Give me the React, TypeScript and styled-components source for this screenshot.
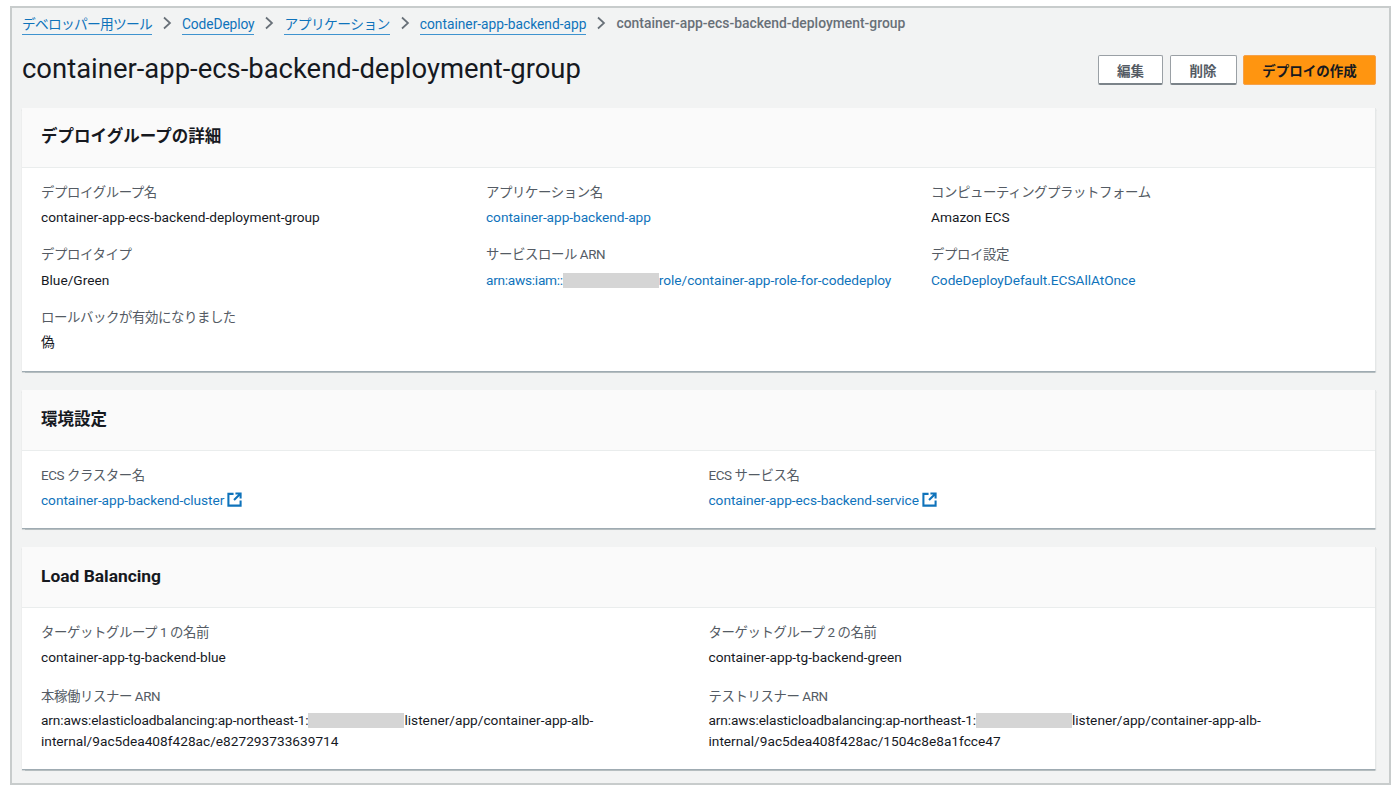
import React from 'react';
import styled, { createGlobalStyle } from 'styled-components';

const Global = createGlobalStyle`
  html, body { margin: 0; padding: 0; background: #ffffff; }
  body { font-family: Roboto, "Noto Sans CJK JP", sans-serif; color: #16191f; }
`;

const Frame = styled.div`
  box-sizing: border-box;
  width: 1381px;
  height: 779px;
  margin: 6px 0 0 10px;
  padding: 0 13px 0 10px;
  background: #f2f3f3;
  border: 2px solid #c8cccc;
`;

const Breadcrumbs = styled.nav`
  box-sizing: border-box;
  display: flex;
  align-items: center;
  height: 30px;
  font-size: 13.75px;
`;

const Crumb = styled.a<{ $tracking?: number }>`
  color: #0f73bb;
  border-bottom: 1.5px solid #3f93cf;
  line-height: 19px;
  padding-top: 3px;
  letter-spacing: ${p => p.$tracking ?? 0}px;
`;

const CurrentCrumb = styled.span`
  color: #687078;
  font-weight: 500;
  font-size: 13.9px;
  line-height: 19px;
  padding-top: 1px;
`;

const Chevron = styled.svg`
  width: 10px;
  height: 14px;
  margin: 0 10px 0 10px;
  fill: none;
  stroke: #687078;
  stroke-width: 1.7;
`;

const HeaderRow = styled.header`
  display: flex;
  align-items: center;
  justify-content: space-between;
  height: 52px;
  margin-top: 5px;
  margin-bottom: 13px;
`;

const Title = styled.h1`
  margin: 0;
  font-size: 27.45px;
  font-weight: 400;
  color: #16191f;
`;

const Actions = styled.div`
  display: flex;
  gap: 6.5px;
  margin-top: 2px;
`;

const Button = styled.button<{ $primary?: boolean; $w: number }>`
  box-sizing: border-box;
  width: ${p => p.$w}px;
  height: 30px;
  padding: 0;
  border-radius: 2px;
  border: 1px solid ${p => (p.$primary ? '#f5a14a' : '#9aa0a5')};
  border-bottom-width: ${p => (p.$primary ? 1 : 2)}px;
  border-bottom-color: ${p => (p.$primary ? '#f5a14a' : '#7b8389')};
  background: ${p => (p.$primary ? '#ff9510' : '#ffffff')};
  color: ${p => (p.$primary ? '#16191f' : '#545b64')};
  font-family: inherit;
  font-size: 13.5px;
  font-weight: 700;
`;

const Card = styled.section<{ $h: number }>`
  box-sizing: border-box;
  height: ${p => p.$h}px;
  margin-bottom: 18px;
  background: #ffffff;
  border-right: 1px solid #e4e7e7;
  border-bottom: 1px solid #9fabb2;
  box-shadow: 0 0.5px 1px rgba(0, 28, 36, 0.25);
`;

const CardHeader = styled.div<{ $h: number }>`
  box-sizing: border-box;
  display: flex;
  align-items: center;
  height: ${p => p.$h}px;
  padding: 0 19px 5px;
  background: #fafafa;
  border-bottom: 1px solid #eaeded;
`;

const CardTitle = styled.h2<{ $latin?: boolean }>`
  margin: 0;
  padding-top: ${p => (p.$latin ? 2 : 0)}px;
  font-size: ${p => (p.$latin ? 17.4 : 16.5)}px;
  font-weight: 700;
  color: #16191f;
`;

const Fields = styled.div<{ $cols: number; $gap: number }>`
  display: grid;
  grid-template-columns: repeat(${p => p.$cols}, ${p => (p.$cols === 3 ? '445px' : '667.5px')});
  padding: 11.5px 19px 0;
  row-gap: ${p => p.$gap}px;
`;

const Field = styled.div`
  min-width: 0;
`;

const Label = styled.div`
  font-size: 13.4px;
  line-height: 25px;
  letter-spacing: -0.4px;
  color: #545b64;
`;

const Value = styled.div`
  font-size: 13.7px;
  line-height: 20px;
  margin-top: 2.5px;
  color: #16191f;
`;

const Wrapped = styled(Value)`
  width: 560px;
  line-height: 21px;
  margin-top: 1.5px;
`;

const LinkText = styled.a`
  color: #0f73bb;
  letter-spacing: -0.04px;
`;

const Prefix = styled.span<{ $tracking: number }>`
  letter-spacing: ${p => p.$tracking}px;
`;

const Mask = styled.span`
  display: inline-block;
  width: 96px;
  height: 15px;
  vertical-align: -3px;
  background: #d5d5d5;
`;

const ExternalIcon = styled.svg`
  width: 15px;
  height: 15px;
  margin-left: 3px;
  vertical-align: -2px;
  fill: none;
  stroke: #0f73bb;
  stroke-width: 2.2;
`;

const External = () => (
  <ExternalIcon viewBox="0 0 16 16" aria-hidden>
    <path d="M7 2H1.5v12.5h13V9" />
    <path d="M9 1.5h5.5V7M14.5 1.5 7.5 8.5" />
  </ExternalIcon>
);

const Sep = () => (
  <Chevron viewBox="0 0 10 14" aria-hidden>
    <path d="M2 1.5 8 7l-6 5.5" />
  </Chevron>
);

export default function App() {
  return (
    <>
      <Global />
      <Frame>
        <Breadcrumbs>
          <Crumb $tracking={-0.75}>デベロッパー用ツール</Crumb>
          <Sep />
          <Crumb $tracking={-0.1}>CodeDeploy</Crumb>
          <Sep />
          <Crumb $tracking={-0.55}>アプリケーション</Crumb>
          <Sep />
          <Crumb>container-app-backend-app</Crumb>
          <Sep />
          <CurrentCrumb>container-app-ecs-backend-deployment-group</CurrentCrumb>
        </Breadcrumbs>
        <HeaderRow>
          <Title>container-app-ecs-backend-deployment-group</Title>
          <Actions>
            <Button $w={65}>編集</Button>
            <Button $w={67}>削除</Button>
            <Button $w={133} $primary>デプロイの作成</Button>
          </Actions>
        </HeaderRow>

        <Card $h={264}>
          <CardHeader $h={60}><CardTitle>デプロイグループの詳細</CardTitle></CardHeader>
          <Fields $cols={3} $gap={15}>
            <Field><Label>デプロイグループ名</Label><Value>container-app-ecs-backend-deployment-group</Value></Field>
            <Field><Label>アプリケーション名</Label><Value><LinkText>container-app-backend-app</LinkText></Value></Field>
            <Field><Label>コンピューティングプラットフォーム</Label><Value>Amazon ECS</Value></Field>
            <Field><Label>デプロイタイプ</Label><Value>Blue/Green</Value></Field>
            <Field><Label>サービスロール ARN</Label><Value><LinkText><Prefix $tracking={-0.28}>arn:aws:iam::</Prefix><Mask />role/container-app-role-for-codedeploy</LinkText></Value></Field>
            <Field><Label>デプロイ設定</Label><Value><LinkText>CodeDeployDefault.ECSAllAtOnce</LinkText></Value></Field>
            <Field><Label>ロールバックが有効になりました</Label><Value>偽</Value></Field>
          </Fields>
        </Card>

        <Card $h={139}>
          <CardHeader $h={61}><CardTitle>環境設定</CardTitle></CardHeader>
          <Fields $cols={2} $gap={15}>
            <Field><Label>ECS クラスター名</Label><Value><LinkText>container-app-backend-cluster<External /></LinkText></Value></Field>
            <Field><Label>ECS サービス名</Label><Value><LinkText>container-app-ecs-backend-service<External /></LinkText></Value></Field>
          </Fields>
        </Card>

        <Card $h={223}>
          <CardHeader $h={61}><CardTitle $latin>Load Balancing</CardTitle></CardHeader>
          <Fields $cols={2} $gap={16.5}>
            <Field><Label>ターゲットグループ 1 の名前</Label><Value>container-app-tg-backend-blue</Value></Field>
            <Field><Label>ターゲットグループ 2 の名前</Label><Value>container-app-tg-backend-green</Value></Field>
            <Field><Label>本稼働リスナー ARN</Label><Wrapped><Prefix $tracking={-0.11}>arn:aws:elasticloadbalancing:ap-northeast-1:</Prefix><Mask />listener/app/container-app-alb-internal/9ac5dea408f428ac/e827293733639714</Wrapped></Field>
            <Field><Label>テストリスナー ARN</Label><Wrapped><Prefix $tracking={-0.11}>arn:aws:elasticloadbalancing:ap-northeast-1:</Prefix><Mask />listener/app/container-app-alb-internal/9ac5dea408f428ac/1504c8e8a1fcce47</Wrapped></Field>
          </Fields>
        </Card>
      </Frame>
    </>
  );
}
